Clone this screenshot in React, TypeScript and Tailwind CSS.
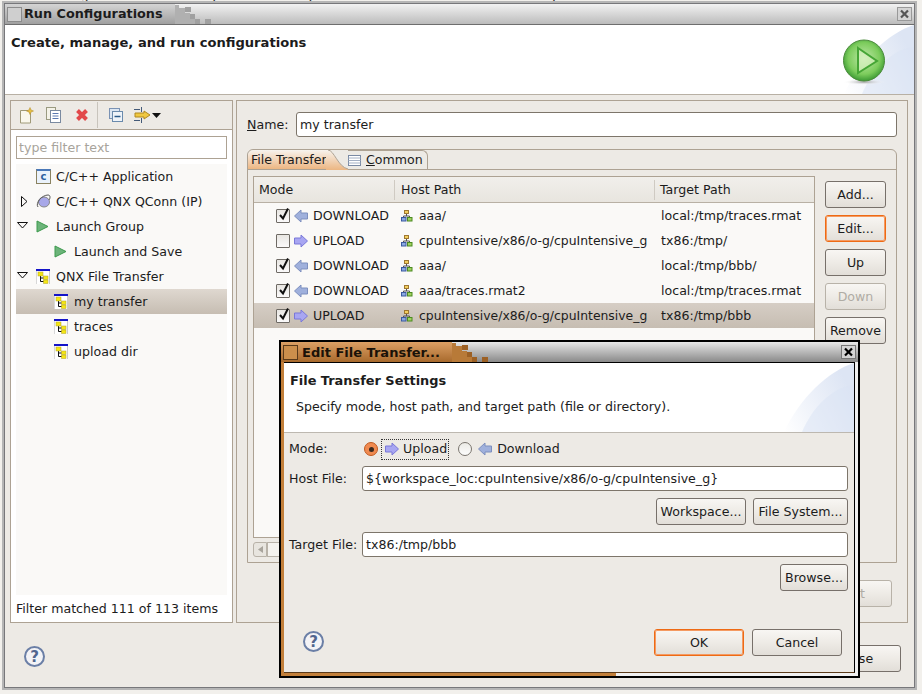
import React from "react";

const font = { fontFamily: '"DejaVu Sans", sans-serif' };

const Btn = ({ label, className = "", disabled = false, focus = false }: { label: string; className?: string; disabled?: boolean; focus?: boolean }) => (
  <div
    className={`flex h-[27px] items-center justify-center rounded-[3px] border bg-gradient-to-b from-[#f8f6f3] via-[#eeebe6] to-[#e2ded8] ${
      focus ? "border-[#ee6a14] outline outline-1 -outline-offset-2 outline-[#f49a62]" : disabled ? "border-[#b8b2a8]" : "border-[#77706a]"
    } ${disabled ? "text-[#b0aca4]" : "text-[#1c1c1c]"} ${className}`}
  >
    {label}
  </div>
);

const ArrowIcon = ({ dir, className = "" }: { dir: "up" | "down"; className?: string }) => (
  <svg width="14" height="14" viewBox="0 0 14 14" className={`shrink-0 ${className}`}>
    {dir === "up" ? (
      <path d="M0.5 7 L7 1 V4 H13.5 V10 H7 V13 Z" fill="#9fb0dc" stroke="#7d8fbe" strokeWidth="1" />
    ) : (
      <path d="M13.5 7 L7 1 V4 H0.5 V10 H7 V13 Z" fill="#a8a6f2" stroke="#7a78d8" strokeWidth="1" />
    )}
  </svg>
);

const QnxIcon = () => (
  <svg width="14" height="15" viewBox="0 0 14 15" className="shrink-0">
    <rect x="0" y="0" width="14" height="15" fill="#fff" />
    <rect x="13" y="0" width="1" height="15" fill="#c8c8c8" />
    <rect x="0" y="0" width="1" height="15" fill="#d8d8d8" />
    <rect x="0" y="0" width="14" height="2" fill="#1414c8" />
    <path d="M4.5 6 V12.5 H8 M4.5 9 H8" stroke="#111" strokeWidth="1" fill="none" />
    <rect x="2" y="3" width="5" height="4" fill="#f4e614" stroke="#b0a030" strokeWidth="0.5" />
    <rect x="7.5" y="7" width="4.5" height="3.5" fill="#f4e614" stroke="#b0a030" strokeWidth="0.5" />
    <rect x="7.5" y="11" width="4.5" height="3.5" fill="#f4e614" stroke="#b0a030" strokeWidth="0.5" />
  </svg>
);

const PlayIcon = () => (
  <svg width="13" height="13" viewBox="0 0 13 13" className="shrink-0">
    <path d="M1 1 L12 6.5 L1 12 Z" fill="#6cb47a" stroke="#3d9a4d" strokeWidth="1" />
  </svg>
);

const HostIcon = () => (
  <svg width="12" height="12" viewBox="0 0 12 12" className="shrink-0">
    <rect x="3.5" y="0.5" width="4" height="3" fill="#f2d060" stroke="#a07830" />
    <path d="M5.5 4 V6 M2.5 7.5 V6 H8.5 V7.5" stroke="#555" fill="none" />
    <rect x="0.5" y="7.5" width="4.5" height="3.5" fill="#8aa8e0" stroke="#3a5aa0" />
    <rect x="6.5" y="7.5" width="4.5" height="3.5" fill="#a0d060" stroke="#4a8a20" />
  </svg>
);

const Check = ({ on }: { on: boolean }) => (
  <div className="relative h-[14px] w-[14px] shrink-0 rounded-[1px] border border-[#6e6a64] bg-gradient-to-b from-[#e8e6e2] to-[#fbfafa]">
    {on && (
      <svg width="14" height="15" viewBox="0 0 14 15" className="absolute -top-[3px] left-0">
        <path d="M3 8 L6 11.5 L11 1.5" stroke="#111" strokeWidth="2" fill="none" />
      </svg>
    )}
  </div>
);

const Help = ({ className = "" }: { className?: string }) => (
  <div className={`flex h-[21px] w-[21px] shrink-0 items-center justify-center rounded-full border-2 border-[#6b7fa6] bg-[#f3f3f6] text-[15px] font-bold text-[#51658e] ${className}`}>
    ?
  </div>
);

const Corner = () => (
  <svg width="76" height="69" viewBox="0 0 76 69" className="absolute right-0 top-0">
    <defs>
      <linearGradient id="cg" x1="0" y1="1" x2="1" y2="0.5">
        <stop offset="0" stopColor="#ffffff" />
        <stop offset="1" stopColor="#dde5f4" />
      </linearGradient>
    </defs>
    <path d="M76 0 C50 8 22 35 6 69 H76 Z" fill="url(#cg)" />
    <path d="M76 22 C54 24 34 45 24 69 H76 Z" fill="#dbe4f4" opacity="0.55" />
  </svg>
);

const Stairs = ({ base, square }: { base: string; square: string }) => (
  <svg width="40" height="19" viewBox="0 0 40 19" className="shrink-0">
    <path d="M0 0 H4 V3 H10 V8 H15 V13 H20 V19 H0 Z" fill={base} />
    <rect x="10" y="2" width="6" height="5" fill={square} />
    <rect x="15" y="9" width="5" height="5" fill={square} />
    <rect x="20" y="14" width="5" height="5" fill={square} />
    <rect x="30" y="14" width="6" height="5" fill={square} />
  </svg>
);

const CloseBox = ({ color, border }: { color: string; border: string }) => (
  <svg width="15" height="14" viewBox="0 0 15 14" className="ml-auto mr-[2px] shrink-0">
    <rect x="0.5" y="0.5" width="14" height="13" fill="#d4d4d4" stroke={border} />
    <path d="M4 3.5 L11 10.5 M11 3.5 L4 10.5" stroke={color} strokeWidth="2.2" />
  </svg>
);

const tree = [
  { label: "C/C++ Application", child: false, icon: "c" },
  { label: "C/C++ QNX QConn (IP)", child: false, icon: "conn", twist: "right" },
  { label: "Launch Group", child: false, icon: "play", twist: "down" },
  { label: "Launch and Save", child: true, icon: "play" },
  { label: "QNX File Transfer", child: false, icon: "qnx", twist: "down" },
  { label: "my transfer", child: true, icon: "qnx", selected: true },
  { label: "traces", child: true, icon: "qnx" },
  { label: "upload dir", child: true, icon: "qnx" },
];

const rows = [
  { on: true, up: false, host: "aaa/", target: "local:/tmp/traces.rmat" },
  { on: false, up: true, host: "cpuIntensive/x86/o-g/cpuIntensive_g", target: "tx86:/tmp/" },
  { on: true, up: false, host: "aaa/", target: "local:/tmp/bbb/" },
  { on: true, up: false, host: "aaa/traces.rmat2", target: "local:/tmp/traces.rmat" },
  { on: true, up: true, host: "cpuIntensive/x86/o-g/cpuIntensive_g", target: "tx86:/tmp/bbb", selected: true },
];

const TreeIcon = ({ icon }: { icon: string }) => {
  if (icon === "qnx") return <QnxIcon />;
  if (icon === "play") return <PlayIcon />;
  if (icon === "c")
    return (
      <div className="flex h-[15px] w-[15px] shrink-0 items-center justify-center border border-[#8a8260] border-t-2 border-t-[#4a78b8] bg-[#eaf2fb] text-[10px] font-bold leading-none text-[#2a60a0]">
        c
      </div>
    );
  return (
    <svg width="15" height="15" viewBox="0 0 15 15" className="shrink-0">
      <ellipse cx="8" cy="8" rx="5.5" ry="5" fill="#a8a8e8" stroke="#888" />
      <path d="M2 13 C-1 9 6 1 12 1 C15 1 14 5 13 6" stroke="#555" fill="none" />
    </svg>
  );
};

export default function App() {
  return (
    <div style={font} className="relative h-[694px] w-[922px] overflow-hidden bg-[#f2f0ec] text-[12.6px] leading-[20px] text-[#1c1c1c]">
      {/* bits of the workbench behind the dialog */}
      <div className="flex h-[2px] items-end overflow-hidden whitespace-nowrap pl-[53px] leading-none">
        <span className="w-[150px] shrink-0">Navigator</span>
        <span className="w-[142px] shrink-0">System Summary</span>
        <span className="w-[162px] shrink-0">Process Information</span>
        <span className="w-[150px] shrink-0">Memory Information</span>
        <span className="shrink-0 text-[#a0a0a0]">Malloc Information</span>
      </div>

      {/* main window */}
      <div className="absolute left-[4px] top-[3px] flex h-[685px] w-[911px] flex-col border border-[#77777a] bg-[#edeae5] outline outline-2 outline-[#b5b5b5]">
        <div className="flex h-[21px] shrink-0 items-center border-b border-[#6e6e6e] bg-gradient-to-b from-[#f2f2f2] to-[#bcbcbc]">
          <div className="flex h-full w-[170px] shrink-0 items-center bg-gradient-to-b from-[#d4d4d4] to-[#a0a0a0]">
            <div className="ml-[2px] h-[15px] w-[15px] border border-[#8c8c8c] bg-[#cfcfcf]" />
            <span className="ml-[2px] text-[12.8px] font-bold leading-none">Run Configurations</span>
          </div>
          <Stairs base="#b0b0b0" square="#a0a0a0" />
          <CloseBox color="#555" border="#999" />
        </div>
        <div className="relative h-[70px] shrink-0 border-b border-[#b8b0a4] bg-white">
          <Corner />
          <div className="relative whitespace-nowrap px-[6px] pt-[11px] text-[13.1px] font-bold leading-none">Create, manage, and run configurations</div>
          <svg width="46" height="48" viewBox="0 0 46 48" className="absolute right-[27px] top-[14px]">
            <defs>
              <radialGradient id="pg" cx="0.5" cy="0.45" r="0.55">
                <stop offset="0" stopColor="#bfe8a8" />
                <stop offset="0.7" stopColor="#7ccc5c" />
                <stop offset="1" stopColor="#3c9a34" />
              </radialGradient>
              <radialGradient id="sh" cx="0.5" cy="0.5" r="0.5">
                <stop offset="0" stopColor="#9a9a9a" />
                <stop offset="1" stopColor="#ffffff" stopOpacity="0" />
              </radialGradient>
            </defs>
            <ellipse cx="23" cy="43" rx="21" ry="3" fill="url(#sh)" />
            <circle cx="23" cy="21.5" r="20.5" fill="url(#pg)" stroke="#4a8a3a" />
            <path d="M17 9 L36 22 L17 34 Z" fill="#dcf2c4" fillOpacity="0.7" stroke="#45a535" strokeWidth="2" />
          </svg>
        </div>
        <div className="flex min-h-0 flex-1 flex-col pl-[5px] pr-[6px] pt-[5px]">
          <div className="flex h-[523px] shrink-0 gap-[3px]">
            {/* left panel */}
            <div className="flex w-[223px] shrink-0 flex-col border border-[#ada293] bg-white">
              <div className="flex h-[29px] shrink-0 items-center border-b border-[#ada293] bg-[#edeae5] pl-[9px]">
                <svg width="14" height="17" viewBox="0 0 14 17">
                  <path d="M0.5 3.5 H8 L10.5 6 V16 H0.5 Z" fill="#faf8ec" stroke="#a09a78" />
                  <path d="M10 0.5 L11 3 L13.5 4 L11 5 L10 7.5 L9 5 L6.5 4 L9 3 Z" fill="#e8c040" stroke="#b08820" strokeWidth="0.5" />
                </svg>
                <svg width="15" height="16" viewBox="0 0 15 16" className="ml-[12px]">
                  <rect x="0.5" y="0.5" width="9" height="12" fill="#f4f2e8" stroke="#9a9a80" />
                  <rect x="4.5" y="3.5" width="10" height="12" fill="#fff" stroke="#7a8aa0" />
                  <path d="M6.5 6.5 H12.5 M6.5 9 H12.5 M6.5 11.5 H12.5" stroke="#5a78b0" />
                </svg>
                <svg width="14" height="14" viewBox="0 0 14 14" className="ml-[14px]">
                  <path d="M2.5 2.5 L11.5 11.5 M11.5 2.5 L2.5 11.5" stroke="#e2484a" strokeWidth="4" />
                </svg>
                <div className="ml-[8px] h-[26px] w-px bg-[#c8c4bc]" />
                <svg width="14" height="14" viewBox="0 0 14 14" className="ml-[11px]">
                  <rect x="0.5" y="0.5" width="10" height="10" fill="#dce6f2" stroke="#7a92b4" />
                  <rect x="3.5" y="3.5" width="10" height="10" fill="#eef3f9" stroke="#6a8aac" />
                  <path d="M5.5 8.5 H11.5" stroke="#2a5a8a" strokeWidth="1.5" />
                </svg>
                <svg width="17" height="16" viewBox="0 0 17 16" className="ml-[11px]">
                  <path d="M0 2.5 H6 M0 13.5 H6 M7.5 0 V5 M7.5 11 V16" stroke="#445a78" />
                  <path d="M1 6 H10 V4 L16 8 L10 12 V10 H1 Z" fill="#f0c840" stroke="#b08820" />
                </svg>
                <svg width="9" height="5" viewBox="0 0 9 5" className="ml-[1px]"><path d="M0 0 H9 L4.5 5 Z" fill="#111" /></svg>
              </div>
              <div className="px-[5px] pt-[6px]">
                <div className="flex h-[23px] items-center border border-[#ada293] bg-white px-[2px] text-[#a8a49c]">type filter text</div>
              </div>
              <div className="mx-[5px] mt-[5px] flex-1 bg-[#faf9f7]">
                {tree.map((t) => (
                  <div key={t.label} className={`relative flex h-[25px] items-center ${t.selected ? "bg-gradient-to-b from-[#dfd8d0] to-[#c6bdb2]" : ""}`}>
                    {t.twist === "right" && (
                      <svg width="7" height="11" viewBox="0 0 7 11" className="absolute left-[5px] top-[7px]"><path d="M0.5 0.5 L6 5.5 L0.5 10.5 Z" fill="none" stroke="#111" /></svg>
                    )}
                    {t.twist === "down" && (
                      <svg width="11" height="7" viewBox="0 0 11 7" className="absolute left-[1px] top-[8px]"><path d="M0.5 0.5 L5.5 6 L10.5 0.5 Z" fill="none" stroke="#111" /></svg>
                    )}
                    <div className={`flex items-center ${t.child ? "pl-[38px]" : "pl-[20px]"}`}>
                      <div className="flex w-[20px] shrink-0 items-center">
                        <TreeIcon icon={t.icon} />
                      </div>
                      <span>{t.label}</span>
                    </div>
                  </div>
                ))}
              </div>
              <div className="flex h-[27px] shrink-0 items-center px-[5px]">Filter matched 111 of 113 items</div>
            </div>
            {/* right panel */}
            <div className="flex min-w-0 flex-1 flex-col border border-[#ada293] px-[10px] pt-[11px]">
              <div className="flex h-[25px] shrink-0 items-center">
                <span className="w-[49px] shrink-0"><u>N</u>ame:</span>
                <div className="flex h-[25px] flex-1 items-center rounded-[3px] border border-[#7d756a] bg-white px-[3px]">my transfer</div>
              </div>
              <div className="mt-[12px] flex h-[414px] shrink-0 flex-col rounded-t-[6px] border border-[#ada293]">
                <div className="flex h-[20px] shrink-0 items-stretch border-b border-[#ada293]">
                  <div className="flex w-[78px] items-center rounded-tl-[6px] bg-gradient-to-b from-[#f7f3ee] to-[#ecb682] pl-[3px]">
                    <span className="whitespace-nowrap">File Transfer</span>
                  </div>
                  <svg width="22" height="20" viewBox="0 0 22 20" className="shrink-0">
                    <defs>
                      <linearGradient id="tabg" x1="0" y1="0" x2="0" y2="1">
                        <stop offset="0" stopColor="#f7f3ee" />
                        <stop offset="1" stopColor="#ecb682" />
                      </linearGradient>
                    </defs>
                    <path d="M0 0 H2 C8 0 12 17 22 19 V20 H0 Z" fill="url(#tabg)" />
                    <path d="M2 0 C8 0 12 17 22 19" fill="none" stroke="#ada293" />
                  </svg>
                  <div className="flex w-[80px] items-center gap-[5px] rounded-tr-[6px] border-r border-t border-[#ada293]">
                    <svg width="13" height="11" viewBox="0 0 13 11" className="shrink-0">
                      <rect x="0.5" y="0.5" width="12" height="10" fill="#fff" stroke="#7a8aa4" />
                      <path d="M0.5 3 H12.5 M0.5 5.5 H12.5 M0.5 8 H12.5" stroke="#a4b0c4" />
                    </svg>
                    <span><u>C</u>ommon</span>
                  </div>
                </div>
                <div className="flex min-h-0 flex-1 gap-[10px] pl-[5px] pr-[10px] pt-[6px]">
                  <div className="flex w-[562px] shrink-0 flex-col">
                    <div className="flex h-[362px] shrink-0 flex-col border border-[#ada293] bg-[#faf9f7]">
                      <div className="flex h-[26px] shrink-0 items-center border-b border-[#b8b0a4] bg-gradient-to-b from-[#f1efeb] to-[#e8e5df]">
                        <div className="w-[141px] border-r border-[#cfcac2] pl-[5px]">Mode</div>
                        <div className="w-[260px] border-r border-[#cfcac2] pl-[6px]">Host Path</div>
                        <div className="pl-[5px]">Target Path</div>
                      </div>
                      {rows.map((r, i) => (
                        <div key={i} className={`flex h-[25px] shrink-0 items-center ${r.selected ? "bg-gradient-to-b from-[#d6cec5] to-[#c6bdb2]" : ""}`}>
                          <div className="flex w-[141px] shrink-0 items-center pl-[22px]">
                            <Check on={r.on} />
                            <ArrowIcon dir={r.up ? "down" : "up"} className="ml-[4px]" />
                            <span className="ml-[5px]">{r.up ? "UPLOAD" : "DOWNLOAD"}</span>
                          </div>
                          <div className="flex w-[260px] shrink-0 items-center gap-[6px] pl-[6px]">
                            <HostIcon />
                            <span className="whitespace-nowrap text-[12.4px]">{r.host}</span>
                          </div>
                          <div className="whitespace-nowrap pl-[6px]">{r.target}</div>
                        </div>
                      ))}
                    </div>
                    <div className="mt-[4px] flex h-[15px] shrink-0 items-center">
                      <div className="flex h-[15px] w-[14px] items-center justify-center rounded-l-[3px] border border-[#b8b2a8] bg-[#e8e5df]">
                        <svg width="5" height="7" viewBox="0 0 5 7"><path d="M5 0 V7 L0 3.5 Z" fill="#a8a49c" /></svg>
                      </div>
                      <div className="h-[15px] w-[14px] border border-[#b8b2a8] bg-[#f4f2ee]" />
                    </div>
                  </div>
                  <div className="flex w-[61px] shrink-0 flex-col gap-[7px] pt-[5px]">
                    <Btn label="Add..." />
                    <Btn label="Edit..." focus />
                    <Btn label="Up" />
                    <Btn label="Down" disabled />
                    <Btn label="Remove" />
                  </div>
                </div>
              </div>
              <div className="mt-[17px] flex justify-end pr-[5px]">
                <Btn label="Revert" disabled className="w-[90px] !justify-end pr-[26px]" />
              </div>
            </div>
          </div>
          <div className="flex flex-1 items-start justify-between pt-[22px]">
            <Help className="ml-[14px] mt-[1px]" />
            <Btn label="Close" className="mr-[7px] w-[90px]" />
          </div>
        </div>
      </div>

      {/* modal */}
      <div className="absolute left-[279px] top-[340px] flex h-[338px] w-[581px] flex-col border-2 border-black bg-gradient-to-r from-[#c27f3a] from-[58%] to-[#f0f0f0] to-[58%]">
        <div className="flex h-[20px] shrink-0 items-center bg-gradient-to-b from-[#e8e8e8] to-[#8a8a8a]">
          <div className="flex h-full w-[171px] shrink-0 items-center bg-gradient-to-b from-[#dca064] to-[#a86a2c]">
            <div className="ml-[2px] h-[15px] w-[15px] border border-[#5a3a1a] bg-[#cc8f4c]" />
            <span className="ml-[4px] whitespace-nowrap text-[13px] font-bold leading-none text-[#1a1208]">Edit File Transfer...</span>
          </div>
          <Stairs base="#b87a38" square="#9c6024" />
          <CloseBox color="#000" border="#777" />
        </div>
        <div className="ml-[3px] mr-[3px] mb-[3px] flex min-h-0 flex-1 flex-col border-r border-t border-b border-black border-b-[#5a3a1a] bg-[#edeae5]">
          <div className="relative h-[70px] shrink-0 border-b border-[#bdb8b0] bg-white">
            <Corner />
            <div className="relative pl-[6px] pt-[12px] text-[12.9px] font-bold leading-none">File Transfer Settings</div>
            <div className="relative pl-[12px] pt-[13px] leading-none">Specify mode, host path, and target path (file or directory).</div>
          </div>
          <div className="flex flex-1 flex-col pl-[5px] pr-[6px]">
            <div className="mt-[5px] flex h-[22px] items-center">
              <span className="w-[75px]">Mode:</span>
              <div className="flex h-[14px] w-[14px] items-center justify-center rounded-full border border-[#c05a20] bg-[#f08a50]">
                <div className="h-[5px] w-[5px] rounded-full bg-[#3a2a20]" />
              </div>
              <div className="ml-[3px] flex h-[21px] items-center border border-dotted border-[#333] pl-[3px] pr-[1px]">
                <ArrowIcon dir="down" />
                <span className="ml-[4px]">Upload</span>
              </div>
              <div className="ml-[9px] h-[14px] w-[14px] rounded-full border border-[#7a756e] bg-gradient-to-b from-[#ecebe6] to-[#fcfcfc]" />
              <ArrowIcon dir="up" className="ml-[6px]" />
              <span className="ml-[5px]">Download</span>
            </div>
            <div className="mt-[6px] flex h-[25px] items-center">
              <span className="w-[73px]">Host File:</span>
              <div className="flex h-[25px] flex-1 items-center rounded-[3px] border border-[#7d756a] bg-white px-[3px]">{"${workspace_loc:cpuIntensive/x86/o-g/cpuIntensive_g}"}</div>
            </div>
            <div className="mt-[7px] flex justify-end gap-[7px]">
              <Btn label="Workspace..." className="w-[90px]" />
              <Btn label="File System..." className="w-[95px]" />
            </div>
            <div className="mt-[7px] flex h-[25px] items-center">
              <span className="w-[73px]">Target File:</span>
              <div className="flex h-[25px] flex-1 items-center rounded-[3px] border border-[#7d756a] bg-white px-[3px]">tx86:/tmp/bbb</div>
            </div>
            <div className="mt-[7px] flex justify-end">
              <Btn label="Browse..." className="w-[68px]" />
            </div>
            <div className="mt-[38px] flex items-center pl-[14px]">
              <Help className="-mt-[2px]" />
              <Btn label="OK" focus className="ml-auto w-[90px]" />
              <Btn label="Cancel" className="ml-[8px] mr-[6px] w-[90px]" />
            </div>
          </div>
        </div>
      </div>
    </div>
  );
}
